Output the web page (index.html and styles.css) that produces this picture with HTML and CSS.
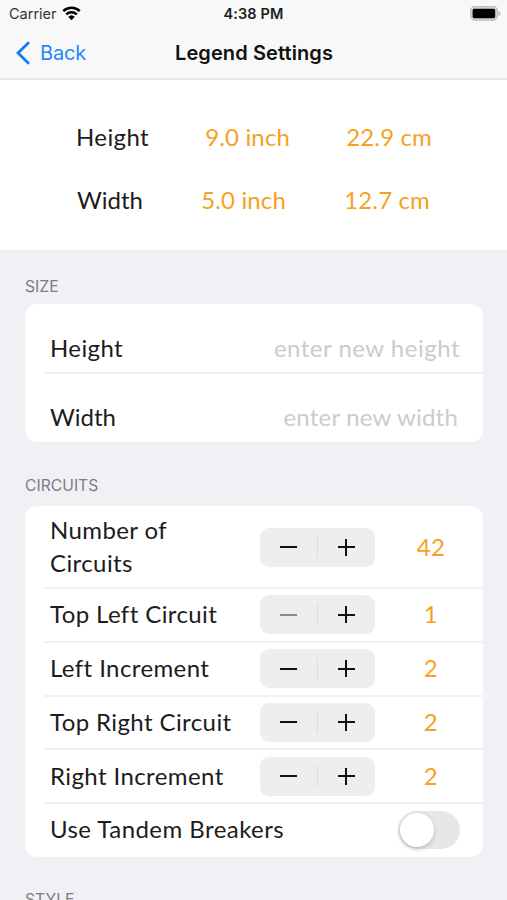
FILE: index.html
```
<!DOCTYPE html>
<html lang="en">
<head>
    <meta charset="UTF-8">
    <meta name="viewport" content="width=device-width, initial-scale=1.0">
    <title>Legend Settings</title>
    <link rel="stylesheet" href="styles.css">
</head>
<body>
    <header class="header">
        <div class="status-bar">
            <div class="carrier">
                <span>Carrier</span>
                <svg width="19" height="15" viewBox="0 0 18 14">
                    <path d="M1.2 4.7a11.2 11.2 0 0 1 15.6 0M4 7.9a7.2 7.2 0 0 1 10 0" fill="none" stroke="#000" stroke-width="2.4"/>
                    <path d="M5.9 10.1a4.5 4.5 0 0 1 6.2 0L9 13.3z"/>
                </svg>
            </div>
            <div class="time">4:38 PM</div>
            <div class="battery">
                <svg width="31" height="15" viewBox="0 0 31 15">
                    <rect x=".7" y=".7" width="26.6" height="13.4" rx="4" fill="#d8d8d8" stroke="#bcbcbc" stroke-width="1.2"/>
                    <rect x="2.6" y="2.8" width="22.6" height="9.4" rx="1.6"/>
                    <path d="M28.5 5v5q2-.8 2-2.500t-2-2.500z" fill="#b4b4b4"/>
                </svg>
            </div>
        </div>
        <nav class="nav-bar">
            <a class="back">
                <svg width="15" height="24" viewBox="0 0 15 24">
                    <path d="M14 1.200L3 12L14 22.800" fill="none" stroke="#117df5" stroke-width="2.800"/>
                </svg>
                <span>Back</span>
            </a>
            <h1 class="title">Legend Settings</h1>
        </nav>
    </header>

    <section class="summary">
        <div class="summary-row">
            <span>Height</span>
            <span class="value">9.0 inch</span>
            <span class="value">22.9 cm</span>
        </div>
        <div class="summary-row narrow">
            <span>Width</span>
            <span class="value">5.0 inch</span>
            <span class="value">12.7 cm</span>
        </div>
    </section>

    <main class="settings">
        <h2 class="section-title">SIZE</h2>
        <div class="card size-card">
            <label class="row">
                <span>Height</span>
                <input class="field" type="text" placeholder="enter new height">
            </label>
            <label class="row">
                <span class="width-label">Width</span>
                <input class="field width-field" type="text" placeholder="enter new width">
            </label>
        </div>

        <h2 class="section-title">CIRCUITS</h2>
        <div class="card circuits-card">
            <div class="row tall">
                <span class="label">Number of Circuits</span>
                <div class="stepper"><button class="minus"></button><button class="plus"></button></div>
                <span class="value">42</span>
            </div>
            <div class="row">
                <span class="label">Top Left Circuit</span>
                <div class="stepper"><button class="minus" disabled></button><button class="plus"></button></div>
                <span class="value">1</span>
            </div>
            <div class="row">
                <span class="label">Left Increment</span>
                <div class="stepper"><button class="minus"></button><button class="plus"></button></div>
                <span class="value">2</span>
            </div>
            <div class="row">
                <span class="label">Top Right Circuit</span>
                <div class="stepper"><button class="minus"></button><button class="plus"></button></div>
                <span class="value">2</span>
            </div>
            <div class="row">
                <span class="label">Right Increment</span>
                <div class="stepper"><button class="minus"></button><button class="plus"></button></div>
                <span class="value">2</span>
            </div>
            <div class="row">
                <span class="switch-label">Use Tandem Breakers</span>
                <div class="switch"><div class="knob"></div></div>
            </div>
        </div>

        <h2 class="section-title">STYLE</h2>
    </main>
</body>
</html>
```

FILE: styles.css
```
*{
    box-sizing: border-box;
}
body{
    margin: 0;
    height: 900px;
    overflow: hidden;
    background-color: #f0f0f5;
    color: #1c1c1c;
    font-family: Lato, "Liberation Sans", sans-serif;
    font-size: 24px;
    letter-spacing: 0.4px;
}
.header{
    height: 80px;
    background-color: #f8f8f8;
    border-bottom: 2px solid #e8e8e8;
    font-family: Inter, "Liberation Sans", sans-serif;
    letter-spacing: 0;
}
.status-bar{
    display: grid;
    grid-template-columns: 1fr auto 1fr;
    align-items: center;
    height: 27px;
    padding: 0 6px 0 9px;
    font-size: 14.5px;
}
.carrier{
    display: flex;
    align-items: center;
    gap: 5px;
    color: #333;
}
.time{
    margin-right: 3px;
    font-weight: 600;
    letter-spacing: 0.1px;
}
.battery{
    display: flex;
    justify-content: flex-end;
}
.nav-bar{
    display: grid;
    grid-template-columns: 1fr auto 1fr;
    align-items: center;
    height: 51px;
    padding: 0 14px 0 15px;
}
.back{
    display: flex;
    align-items: center;
    gap: 10px;
    color: #2489f7;
    font-size: 20px;
    letter-spacing: -0.2px;
}
.title{
    margin: 0;
    color: #111;
    font-size: 20px;
    font-weight: 600;
    letter-spacing: 0.1px;
}
.summary{
    height: 170px;
    padding-top: 25px;
    background-color: #fff;
}
.summary-row{
    display: flex;
    justify-content: space-between;
    align-items: center;
    height: 63px;
    padding: 0 75px 0 76px;
}
.summary-row.narrow{
    padding: 0 77px;
}
.summary .value{
    letter-spacing: 0.15px;
}
.narrow,.width-label{
    letter-spacing: 0;
}
.value{
    color: #f8a01f;
}
.settings{
    padding: 0 24px 0 25px;
}
.section-title{
    margin: 0;
    padding-top: 27px;
    height: 54px;
    color: #7d7d82;
    font-family: Inter, "Liberation Sans", sans-serif;
    font-size: 15.7px;
    font-weight: 400;
    line-height: 20px;
    letter-spacing: 0;
}
.card{
    border-radius: 12px;
    background-color: #fff;
}
.card + .section-title{
    padding-top: 34px;
    height: 64px;
}
.row{
    position: relative;
    display: flex;
    align-items: center;
    height: 53.75px;
    padding: 0 0 2px 25px;
}
.row + .row::before{
    content: "";
    position: absolute;
    top: -1px;
    left: 19px;
    right: 0;
    height: 2px;
    background-color: #f1f1f2;
}
.size-card{
    height: 138px;
}
.size-card .row{
    height: 69px;
    padding-top: 20px;
    justify-content: space-between;
}
.field{
    width: 250px;
    padding: 0 23px 0 0;
    border: 0;
    background: none;
    font: inherit;
    letter-spacing: 0.5px;
    text-align: right;
}
.width-field{
    padding-right: 25px;
    letter-spacing: 0.2px;
}
.field::placeholder{
    color: #cbcbcd;
}
.circuits-card{
    height: 351px;
    margin-bottom: -1px;
}
.row.tall{
    height: 82px;
    line-height: 33px;
}
.label{
    flex: none;
    width: 210px;
}
.tall .label{
    padding-right: 60px;
}
.row .value{
    flex: none;
    width: 112px;
    text-align: center;
}
.stepper{
    display: flex;
    flex: none;
    width: 115px;
    height: 39px;
    margin-top: 2px;
    border-radius: 9px;
    background: linear-gradient(#dcdcdc, #dcdcdc) 57px 50% / 1px 22px no-repeat #eee;
}
.minus,.plus{
    width: 50%;
    padding: 0;
    border: 0;
    background: linear-gradient(#111, #111) center / 17px 2px no-repeat;
}
.plus{
    background: linear-gradient(#111, #111) center / 17px 2px no-repeat, linear-gradient(#111, #111) center / 2px 17px no-repeat;
}
.minus:disabled{
    opacity: 0.45;
}
.switch-label{
    flex: 1;
    letter-spacing: 0.45px;
}
.switch{
    width: 62px;
    height: 38px;
    margin: 2px 23px 0 0;
    padding: 2px;
    border-radius: 19px;
    background-color: #e7e7e9;
}
.knob{
    width: 34px;
    height: 34px;
    border-radius: 50%;
    background-color: #fff;
    box-shadow: 0 2px 5px rgba(0, 0, 0, 0.2);
}
```
